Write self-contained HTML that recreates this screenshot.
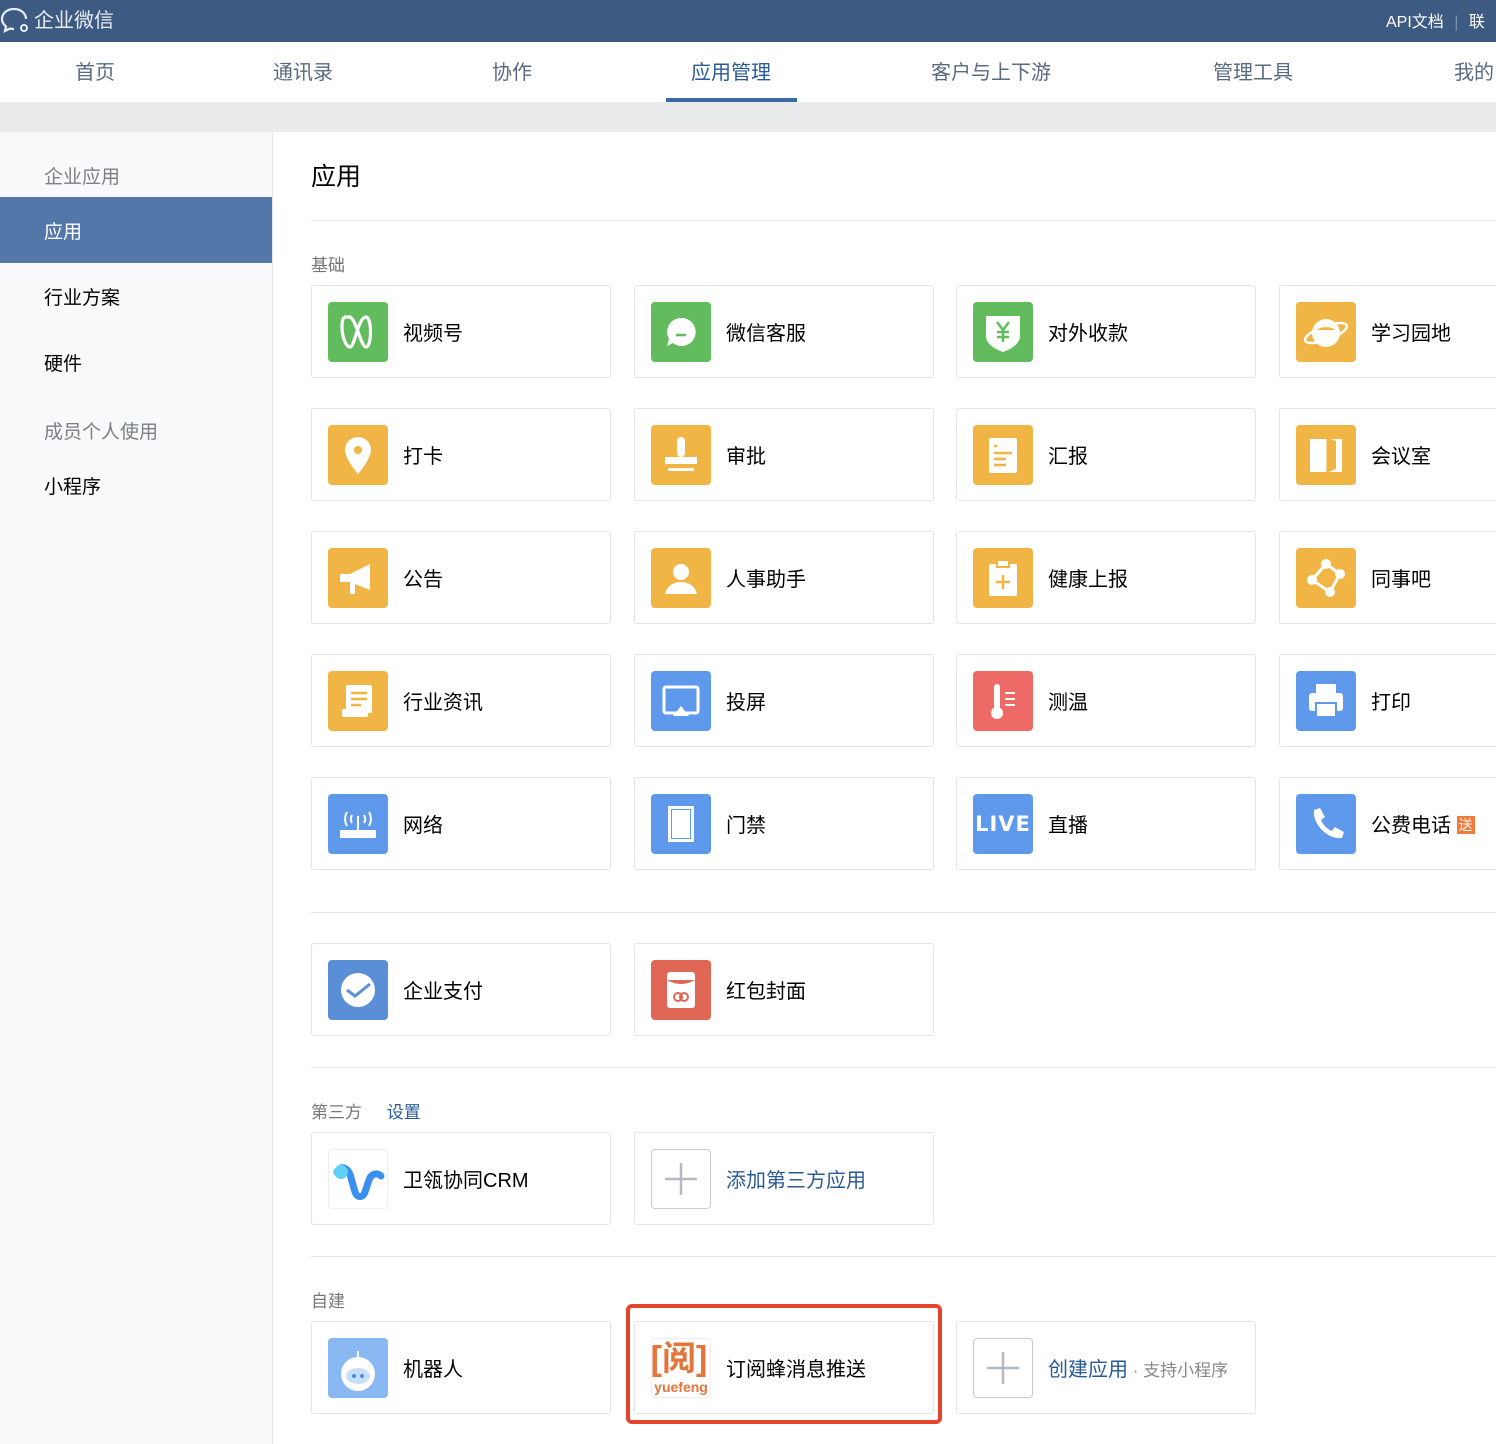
<!DOCTYPE html>
<html><head><meta charset="utf-8"><style>
*{margin:0;padding:0;box-sizing:border-box}
body{width:1496px;height:1444px;overflow:hidden;position:relative;background:#fff;font-family:"Liberation Sans","Noto Sans CJK SC",sans-serif;color:#000}
.a{position:absolute}
.top{left:0;top:0;width:1496px;height:42px;background:#3d5a82;color:#fff}
.nav{left:0;top:42px;width:1496px;height:60px;background:#fff;box-shadow:0 1px 2px rgba(0,0,0,.08)}
.nav span{position:absolute;top:14px;font-size:20px;color:#5a6a80}
.band{left:0;top:102px;width:1496px;height:30px;background:#e9eaec}
.side{left:0;top:132px;width:273px;height:1312px;background:#f8f9fb;border-right:1px solid #e4e6e9}
.side span{position:absolute;left:44px;font-size:19px}
.card{position:absolute;width:300px;height:93px;border:1px solid #e2e4e8;border-radius:3px;background:#fff}
.card .ic{position:absolute;left:16px;top:16px;width:60px;height:60px;border-radius:4px;overflow:hidden}
.card .t{position:absolute;left:91px;top:36px;font-size:20px;line-height:24px;white-space:nowrap}
.g{background:#62bc5e}.y{background:#f0b544}.b{background:#5f99eb}.r{background:#ee6a66}
.hr{position:absolute;left:311px;width:1185px;height:1px;background:#e2e4e8}
.lbl{position:absolute;left:311px;font-size:17px;color:#777}
svg{display:block}
</style></head><body>
<div class="a top">
<svg class="a" style="left:0;top:6px" width="32" height="28" viewBox="0 0 32 28"><path d="M14 3C7 3 2 7.5 2 13c0 3 1.5 5.5 4 7.5L5 25l5-2.5c1.3.3 2.6.5 4 .5" fill="none" stroke="#e8edf4" stroke-width="2.2"/><path d="M26 13c0-5.5-5-10-12-10" fill="none" stroke="#e8edf4" stroke-width="2.2"/><circle cx="24" cy="22" r="3" fill="none" stroke="#e8edf4" stroke-width="2"/></svg>
<div class="a" style="left:34px;top:4px;font-size:20px;color:#e8edf4">企业微信</div>
<div class="a" style="left:1386px;top:8px;font-size:16px;color:#fff">API文档 <span style="color:#7f94b3;margin:0 6px">|</span> 联</div>
</div>
<div class="a nav">
<span style="left:75px">首页</span><span style="left:273px">通讯录</span><span style="left:492px">协作</span>
<span style="left:691px;color:#2a5a96">应用管理</span><span style="left:931px">客户与上下游</span><span style="left:1213px">管理工具</span><span style="left:1454px">我的</span>
<div class="a" style="left:666px;top:56px;width:131px;height:4px;background:#3b6aa6"></div>
</div>
<div class="a band"></div>
<div class="a side">
<span style="top:30px;color:#7a7f88">企业应用</span>
<div class="a" style="left:0;top:65px;width:272px;height:66px;background:#5277a8"></div>
<span style="top:85px;color:#fff">应用</span>
<span style="top:151px">行业方案</span>
<span style="top:217px">硬件</span>
<span style="top:285px;color:#7a7f88">成员个人使用</span>
<span style="top:340px">小程序</span>
</div>
<div class="a" style="left:311px;top:157px;font-size:25px">应用</div>
<div class="hr" style="top:220px"></div>
<div class="lbl" style="top:251px">基础</div>

<div class="card" style="left:311px;top:285px"><div class="ic g"><svg width="60" height="60"><path d="M16 15c-5 8 0 30 6 30 5 0 8-30 16-30 6 0 6 30 0 30-5 0-10-28-16-30-3 0-6 0-6 0" fill="none" stroke="#fff" stroke-width="3.2"/></svg></div><div class="t">视频号</div></div>
<div class="card" style="left:634px;top:285px"><div class="ic g"><svg width="60" height="60"><path d="M30 16a14 14 0 1 1-8 25l-6 3 2-7a14 14 0 0 1 12-21z" fill="#fff"/><path d="M25 33h10" stroke="#62bc5e" stroke-width="2.5"/></svg></div><div class="t">微信客服</div></div>
<div class="card" style="left:956px;top:285px"><div class="ic g"><svg width="60" height="60"><path d="M13 14h34v20c0 8-9 13-17 16-8-3-17-8-17-16z" fill="#fff"/><path d="M24 20l6 8 6-8M30 28v12M24 30h12M24 35h12" stroke="#62bc5e" stroke-width="2.5" fill="none"/></svg></div><div class="t">对外收款</div></div>
<div class="card" style="left:1279px;top:285px"><div class="ic y"><svg width="60" height="60"><circle cx="30" cy="31" r="14" fill="#fff"/><ellipse cx="30" cy="31" rx="22" ry="7" fill="none" stroke="#fff" stroke-width="2.5" transform="rotate(-20 30 31)"/><path d="M21 28a10 5 0 0 1 18 0" fill="#f0b544"/></svg></div><div class="t">学习园地</div></div>
<div class="card" style="left:311px;top:408px"><div class="ic y"><svg width="60" height="60"><path d="M30 12a13 13 0 0 1 13 13c0 9-13 24-13 24S17 34 17 25a13 13 0 0 1 13-13z" fill="#fff"/><circle cx="30" cy="25" r="4" fill="#f0b544"/></svg></div><div class="t">打卡</div></div>
<div class="card" style="left:634px;top:408px"><div class="ic y"><svg width="60" height="60"><rect x="26" y="12" width="8" height="20" rx="4" fill="#fff"/><rect x="14" y="32" width="32" height="7" fill="#fff"/><rect x="17" y="43" width="26" height="3" fill="#fff"/></svg></div><div class="t">审批</div></div>
<div class="card" style="left:956px;top:408px"><div class="ic y"><svg width="60" height="60"><rect x="16" y="13" width="28" height="35" rx="2" fill="#fff"/><path d="M21 21h3M21 28h18M21 34h12M21 40h12" stroke="#f0b544" stroke-width="2.5"/></svg></div><div class="t">汇报</div></div>
<div class="card" style="left:1279px;top:408px"><div class="ic y"><svg width="60" height="60"><rect x="14" y="14" width="32" height="33" fill="#fff"/><path d="M30 12l10 4v28l-10 4z" fill="#f0b544"/><path d="M30 14v32" stroke="#fff" stroke-width="1"/></svg></div><div class="t">会议室</div></div>
<div class="card" style="left:311px;top:531px"><div class="ic y"><svg width="60" height="60"><path d="M12 26h10l20-10v26L22 34H12z" fill="#fff"/><rect x="22" y="34" width="5" height="12" fill="#fff"/></svg></div><div class="t">公告</div></div>
<div class="card" style="left:634px;top:531px"><div class="ic y"><svg width="60" height="60"><circle cx="30" cy="24" r="8" fill="#fff"/><path d="M14 46c2-8 8-12 16-12s14 4 16 12z" fill="#fff"/></svg></div><div class="t">人事助手</div></div>
<div class="card" style="left:956px;top:531px"><div class="ic y"><svg width="60" height="60"><rect x="16" y="16" width="28" height="32" rx="2" fill="#fff"/><rect x="24" y="12" width="12" height="7" fill="#fff" stroke="#f0b544" stroke-width="2"/><path d="M30 27v14M23 34h14" stroke="#f0b544" stroke-width="2.5"/></svg></div><div class="t">健康上报</div></div>
<div class="card" style="left:1279px;top:531px"><div class="ic y"><svg width="60" height="60"><path d="M30 16L16 32 34 44 44 26z" fill="none" stroke="#fff" stroke-width="3"/><circle cx="30" cy="16" r="5" fill="#fff"/><circle cx="16" cy="32" r="5" fill="#fff"/><circle cx="34" cy="44" r="5" fill="#fff"/><circle cx="44" cy="26" r="5" fill="#fff"/></svg></div><div class="t">同事吧</div></div>
<div class="card" style="left:311px;top:654px"><div class="ic y"><svg width="60" height="60"><rect x="18" y="14" width="26" height="28" rx="2" fill="#fff"/><rect x="14" y="38" width="26" height="8" rx="2" fill="#fff"/><path d="M23 22h16M23 28h16M23 34h10" stroke="#f0b544" stroke-width="2.5"/></svg></div><div class="t">行业资讯</div></div>
<div class="card" style="left:634px;top:654px"><div class="ic b"><svg width="60" height="60"><rect x="13" y="16" width="34" height="26" rx="2" fill="none" stroke="#fff" stroke-width="3"/><path d="M22 45l8-10 8 10z" fill="#fff"/></svg></div><div class="t">投屏</div></div>
<div class="card" style="left:956px;top:654px"><div class="ic r"><svg width="60" height="60"><rect x="21" y="13" width="6" height="26" rx="3" fill="#fff"/><circle cx="24" cy="42" r="6" fill="#fff"/><path d="M32 22h10M32 28h10M32 34h10" stroke="#fff" stroke-width="2"/></svg></div><div class="t">测温</div></div>
<div class="card" style="left:1279px;top:654px"><div class="ic b"><svg width="60" height="60"><rect x="20" y="13" width="20" height="9" fill="#fff"/><rect x="13" y="22" width="34" height="18" rx="3" fill="#fff"/><rect x="20" y="32" width="20" height="14" fill="#fff" stroke="#5f99eb" stroke-width="2"/></svg></div><div class="t">打印</div></div>
<div class="card" style="left:311px;top:777px"><div class="ic b"><svg width="60" height="60"><rect x="12" y="36" width="36" height="8" rx="1" fill="#fff"/><path d="M19 18a14 14 0 0 0 0 14M41 18a14 14 0 0 1 0 14M24 21a8 8 0 0 0 0 8M36 21a8 8 0 0 1 0 8" fill="none" stroke="#fff" stroke-width="2"/><path d="M30 22v14" stroke="#fff" stroke-width="2"/></svg></div><div class="t">网络</div></div>
<div class="card" style="left:634px;top:777px"><div class="ic b"><svg width="60" height="60"><rect x="17" y="12" width="26" height="36" fill="#fff"/><rect x="20" y="15" width="20" height="30" fill="#5f99eb"/><rect x="21" y="16" width="18" height="28" fill="#fff"/></svg></div><div class="t">门禁</div></div>
<div class="card" style="left:956px;top:777px"><div class="ic b" style="color:#fff;font-weight:bold;font-size:21px;line-height:60px;text-align:center;letter-spacing:1px;font-family:'DejaVu Sans',sans-serif">LIVE</div><div class="t">直播</div></div>
<div class="card" style="left:1279px;top:777px"><div class="ic b"><svg width="60" height="60"><path d="M18 16l6-2 5 9-4 3c2 5 6 9 11 11l3-4 9 5-2 6c-14 2-30-14-28-28z" fill="#fff"/></svg></div><div class="t">公费电话 <span style="display:inline-block;background:#ef7b3c;color:#fff;font-size:14px;line-height:18px;padding:0 2px;vertical-align:2px">送</span></div></div>

<div class="hr" style="top:912px"></div>
<div class="card" style="left:311px;top:943px"><div class="ic b" style="background:#5a8fd8"><svg width="60" height="60"><circle cx="30" cy="30" r="17" fill="#fff"/><path d="M19 30l8 6 15-12" fill="none" stroke="#5a8fd8" stroke-width="3"/></svg></div><div class="t">企业支付</div></div>
<div class="card" style="left:634px;top:943px"><div class="ic" style="background:#e06656"><svg width="60" height="60"><rect x="16" y="12" width="28" height="36" rx="3" fill="#fff"/><path d="M16 20q14 8 28 0" fill="#e06656"/><circle cx="27" cy="37" r="4" fill="none" stroke="#e06656" stroke-width="2"/><circle cx="33" cy="37" r="4" fill="none" stroke="#e06656" stroke-width="2"/></svg></div><div class="t">红包封面</div></div>

<div class="hr" style="top:1067px"></div>
<div class="lbl" style="top:1098px">第三方 <span style="color:#2a5a96;margin-left:20px">设置</span></div>
<div class="card" style="left:311px;top:1132px"><div class="ic" style="background:#fff;border:1px solid #eee"><svg width="60" height="60"><path d="M8 22c4-8 12-4 14 6l4 14c2 6 8 6 10 0l4-12c2-6 8-8 12-4" fill="none" stroke="#3a8ff0" stroke-width="7" stroke-linecap="round"/><circle cx="12" cy="22" r="7" fill="#5ed0f5"/></svg></div><div class="t">卫瓴协同CRM</div></div>
<div class="card" style="left:634px;top:1132px"><div class="ic" style="border:1px solid #c8ccd2;background:#fff"><svg width="58" height="58"><path d="M29 13v32M13 29h32" stroke="#b5bac2" stroke-width="2.5"/></svg></div><div class="t" style="color:#2a5a96">添加第三方应用</div></div>

<div class="hr" style="top:1256px"></div>
<div class="lbl" style="top:1287px">自建</div>
<div class="card" style="left:311px;top:1321px"><div class="ic" style="background:#8ab8f3"><svg width="60" height="60"><circle cx="30" cy="36" r="17" fill="#fff"/><ellipse cx="30" cy="38" rx="12" ry="8" fill="#c7def8"/><circle cx="26" cy="38" r="2" fill="#4a8ae0"/><circle cx="34" cy="38" r="2" fill="#4a8ae0"/><path d="M30 19v-6" stroke="#fff" stroke-width="2"/></svg></div><div class="t">机器人</div></div>
<div class="card" style="left:634px;top:1321px"><div class="ic" style="background:#fff;border:1px solid #eee;color:#e3743a;text-align:center"><div style="font-size:34px;line-height:40px;font-weight:bold;margin-left:-4px;white-space:nowrap">[阅]</div><div style="font-size:14px;line-height:16px;font-weight:bold">yuefeng</div></div><div class="t">订阅蜂消息推送</div></div>
<div class="card" style="left:956px;top:1321px"><div class="ic" style="border:1px solid #c8ccd2;background:#fff"><svg width="58" height="58"><path d="M29 13v32M13 29h32" stroke="#b5bac2" stroke-width="2.5"/></svg></div><div class="t" style="color:#2a5a96">创建应用<span style="color:#888;font-size:17px"> · 支持小程序</span></div></div>
<div class="a" style="left:626px;top:1304px;width:316px;height:120px;border:4px solid #e4432c;border-radius:6px"></div>
</body></html>
